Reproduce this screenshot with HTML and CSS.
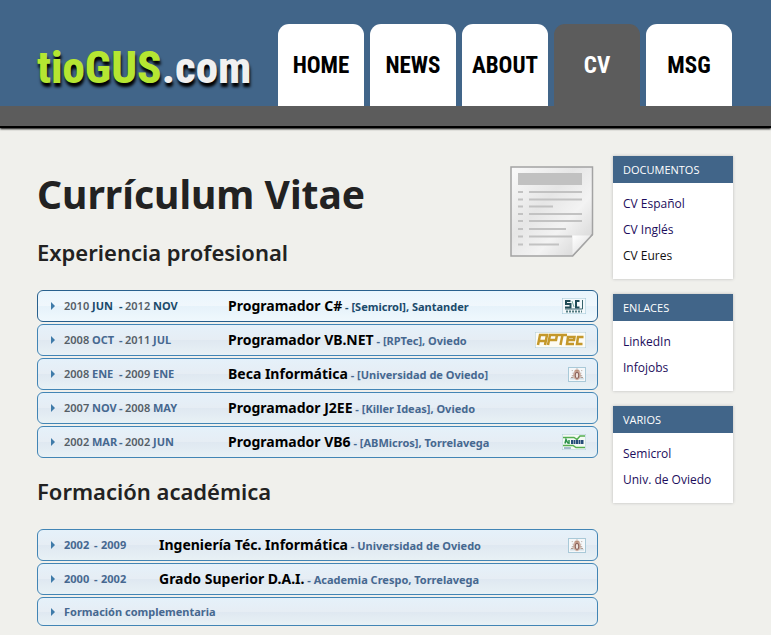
FILE: index.html
```html
<!DOCTYPE html>
<html lang="es">
<head>
<meta charset="utf-8">
<title>tioGUS.com - Currículum Vitae</title>
<link rel="stylesheet" href="styles.css">
</head>
<body>
<svg class="defs" aria-hidden="true">
  <symbol id="crest" viewBox="0 0 18 15">
    <path d="M1 12.500h16" stroke="#b9cbd6"/>
    <path d="M6 3c1-1.500 5-1.500 6 0l1.500 5c0 3-2 5-4.500 6-2.500-1-4.500-3-4.500-6z" fill="#cfae9f"/>
    <path d="M7 2h4v2H7z" fill="#b98f7b"/>
    <ellipse cx="9" cy="8.500" rx="2" ry="3.500" fill="#ece3de" stroke="#8b625a" stroke-width="1.200"/>
    <path d="M3 3h1M14 3h1M4 6h1M13 6h1M3 9h2M13 9h2M2 11h3M13 11h3M8.500 1h1" stroke="#a08a7f"/>
  </symbol>
</svg>
<header class="site-header">
  <div class="header-inner">
    <a class="logo" href="#"><span class="logo-name">tioGUS</span>.com</a>
    <nav class="tabs">
      <a href="#">HOME</a>
      <a href="#">NEWS</a>
      <a href="#">ABOUT</a>
      <a class="current" href="#">CV</a>
      <a href="#">MSG</a>
    </nav>
  </div>
</header>
<div class="page">
  <main class="content">
    <div class="intro">
      <div>
        <h1>Currículum Vitae</h1>
        <h2>Experiencia profesional</h2>
      </div>
      <svg class="doc-icon" viewBox="0 0 84 92" aria-hidden="true">
        <defs>
          <linearGradient id="paper" x1="0" y1="0" x2="1" y2="1">
            <stop offset="0" stop-color="#fafafa"/><stop offset=".4" stop-color="#e6e6e6"/><stop offset=".65" stop-color="#f3f3f3"/><stop offset="1" stop-color="#cfcfcf"/>
          </linearGradient>
          <linearGradient id="fold" x1="0" y1="0" x2="1" y2="1">
            <stop offset="0" stop-color="#fff"/><stop offset="1" stop-color="#d8d8d8"/>
          </linearGradient>
        </defs>
        <path d="M1 1h81.500v67.500l-20 21.500H1z" fill="url(#paper)" stroke="#a3a3a3" stroke-width="1.500"/>
        <path d="M62.500 90V69.500h20z" fill="url(#fold)"/>
        <path d="M62.500 90l20-21.500" stroke="#a3a3a3" stroke-width="1.500"/>
        <path d="M8 7h64v12H8z" fill="#c1c1c1"/>
        <path d="M8 26h5M8 33.500h5M8 40.500h5M8 48h5M8 55h5M8 63h5M8 70.500h5M8 78.500h5M19 26h53M19 33.500h53M19 40.500h24M19 48h53M19 55h53M19 63h37M19 70.500h43M19 78.500h30" stroke="#c2c2c2" stroke-width="2"/>
      </svg>
    </div>
    <div class="accordion jobs">
      <button class="active" type="button"><span class="dates"><span class="year">2010</span><span>JUN</span><span>-</span><span class="year">2012</span><span>NOV</span></span><span class="label"><b>Programador C#</b> - [Semicrol], Santander</span>
        <svg class="badge" width="24" height="16" viewBox="0 0 24 16" aria-hidden="true"><path d="M0 0h24v16H0z" fill="#f4f9fb" stroke="#9bc4d6"/><path d="M8.500 3H4v3h4.500v3.500H3M17.500 3H14v6.500h3.500" fill="none" stroke="#1f4b56" stroke-width="2"/><path d="M10 3l2 6" stroke="#7cae9f"/><path d="M20.500 2v9H3" fill="none" stroke="#36636c"/><path d="M4 13.500h16" stroke="#527b80" stroke-width="2" stroke-dasharray="2 1"/></svg></button>
      <button type="button"><span class="dates"><span class="year">2008</span><span>OCT</span><span>-</span><span class="year">2011</span><span>JUL</span></span><span class="label"><b>Programador VB.NET</b> - [RPTec], Oviedo</span>
        <svg class="badge" width="51" height="16" viewBox="0 0 51 16" aria-hidden="true"><path d="M0 0h51v16H0z" fill="#fcfbf4" stroke="#a9c9d8"/><path d="M3 13L5 3h7l-2 10M4 9h6M13 13l2-10h7l-1 5h-7M23 3h9M27.500 3l-2 10M39 12h-7l1-7h6.500l-.5 3h-6M48.500 5H43l-1 7h5.500" fill="none" stroke="#c4982a" stroke-width="2.500"/></svg></button>
      <button type="button"><span class="dates"><span class="year">2008</span><span>ENE</span><span>-</span><span class="year">2009</span><span>ENE</span></span><span class="label"><b>Beca Informática</b> - [Universidad de Oviedo]</span>
        <svg class="badge framed" width="18" height="15" aria-hidden="true"><use href="#crest"/></svg></button>
      <button type="button"><span class="dates"><span class="year">2007</span><span>NOV</span><span>-</span><span class="year">2008</span><span>MAY</span></span><span class="label"><b>Programador J2EE</b> - [Killer Ideas], Oviedo</span></button>
      <button type="button"><span class="dates"><span class="year">2002</span><span>MAR</span><span>-</span><span class="year">2002</span><span>JUN</span></span><span class="label"><b>Programador VB6</b> - [ABMicros], Torrelavega</span>
        <svg class="badge" width="24" height="16" viewBox="0 0 24 16" aria-hidden="true"><path d="M0 0h24v16H0z" fill="#f4faf4" stroke="#a9c9d8"/><path d="M1 3.500h11l3 2 3-3.500h5M1 11.500h10l3 2h9" fill="none" stroke="#54ae50" stroke-width="1.500"/><path d="M3 9.500l1-4 2 4M7 6v4" fill="none" stroke="#2a9048" stroke-width="1.500"/><path d="M9 8h13" stroke="#264c79" stroke-width="4" stroke-dasharray="2 .5"/><path d="M2 14h7" stroke="#537ca0"/></svg></button>
    </div>
    <h2 class="section-title">Formación académica</h2>
    <div class="accordion studies">
      <button type="button"><span class="dates"><span>2002</span><span>-</span><span>2009</span></span><span class="label"><b>Ingeniería Téc. Informática</b> - Universidad de Oviedo</span>
        <svg class="badge framed" width="18" height="15" aria-hidden="true"><use href="#crest"/></svg></button>
      <button type="button"><span class="dates"><span>2000</span><span>-</span><span>2002</span></span><span class="label"><b>Grado Superior D.A.I.</b> - Academia Crespo, Torrelavega</span></button>
      <button class="compact" type="button"><span class="label">Formación complementaria</span></button>
    </div>
  </main>
  <aside class="sidebar">
    <section>
      <h3>DOCUMENTOS</h3>
      <ul><li><a href="#">CV Español</a></li><li><a href="#">CV Inglés</a></li><li><a class="plain" href="#">CV Eures</a></li></ul>
    </section>
    <section>
      <h3>ENLACES</h3>
      <ul><li><a href="#">LinkedIn</a></li><li><a href="#">Infojobs</a></li></ul>
    </section>
    <section>
      <h3>VARIOS</h3>
      <ul><li><a href="#">Semicrol</a></li><li><a href="#">Univ. de Oviedo</a></li></ul>
    </section>
  </aside>
</div>
</body>
</html>
```
FILE: styles.css
```css
* { box-sizing: border-box; }

body {
  margin: 0;
  background: #f0f0ec;
  color: #222;
  font-family: "Noto Sans", "Open Sans", sans-serif;
}

a { text-decoration: none; }

.defs { position: absolute; width: 0; height: 0; }

.site-header {
  background: #416589;
  border-bottom: 2px solid #000;
  box-shadow: 0 1px 2px #000;
}

.site-header::after {
  content: "";
  display: block;
  height: 20px;
  background: #5c5c5c;
}

.header-inner {
  display: flex;
  justify-content: space-between;
  align-items: flex-end;
  padding: 24px 39px 0 37px;
}

.logo {
  padding-bottom: 10px;
  color: #f0f0f0;
  font: 800 45px/56px "Roboto Condensed", Roboto, sans-serif;
  text-shadow: 1px 4px 3px #000;
}

.logo-name { color: #b5e632; }

.tabs { display: flex; gap: 6px; }

.tabs a {
  width: 86px;
  padding-top: 2px;
  border-radius: 11px 11px 0 0;
  background: #fff;
  color: #000;
  font: bold 23px/80px "Roboto Condensed", "Open Sans Condensed", Roboto, "Liberation Sans", sans-serif;
  text-align: center;
}

.tabs .current { background: #5c5c5c; color: #fff; }

.page {
  display: flex;
  gap: 15px;
  align-items: flex-start;
  padding: 28px 38px 8px 37px;
}

.content { flex: 1; min-width: 0; }

.intro {
  display: flex;
  justify-content: space-between;
  align-items: flex-start;
  padding: 10px 4px 0 0;
}

h1 { margin: 0; font-size: 39px; line-height: 56px; }

h2 {
  margin: 14px 0 0;
  font-size: 22px;
  font-weight: 600;
  line-height: 32px;
}

.doc-icon { width: 84px; height: 92px; }

.section-title { margin: 17px 0 22px; }

.jobs { margin-top: 22px; }

.accordion { display: flex; flex-direction: column; gap: 2px; }

.accordion button {
  display: flex;
  align-items: center;
  height: 32px;
  padding: 0 11px 0 13px;
  border: 1px solid #4285b5;
  border-radius: 6px;
  background: linear-gradient(#e5f1fa, #e6edf4 50%, #dfe8f1 51%, #e8f1f5);
  color: #466890;
  font: bold 11px/16px "Noto Sans", "Open Sans", sans-serif;
  text-align: left;
}

.accordion button::before {
  content: "";
  margin-right: 9px;
  border: 4px solid transparent;
  border-right: 0;
  border-left-color: #3f7ba9;
}

.accordion .active {
  border-color: #28608d;
  background: linear-gradient(#e9f5fd, #f0f7fc 50%, #e6f2fa 51%, #eff8fd);
  color: #1b4a6b;
}

.accordion .compact { height: 29px; }

.dates { display: grid; }

.jobs .dates { grid-template-columns: 28px 27px 6px 28px 75px; }

.studies .dates { grid-template-columns: 30px 7px 58px; }

.year { color: #555e66; font-weight: 600; }

.label { flex: 1; }

.label b { color: #000; font-size: 14px; font-weight: 700; }

.framed { border: 1px solid #a9c9d8; background: #f5f8fa; }

.sidebar {
  display: flex;
  flex-direction: column;
  gap: 15px;
  width: 120px;
  font-family: "Open Sans", "Noto Sans", sans-serif;
}

.sidebar section { background: #fff; box-shadow: 0 0 3px #bbb; }

.sidebar h3 {
  margin: 0;
  padding: 0 10px;
  background: #416589;
  color: #fff;
  font-size: 11px;
  font-weight: 400;
  line-height: 27px;
}

.sidebar ul { margin: 0; padding: 8px 10px 10px; list-style: none; }

.sidebar li { font-size: 12px; line-height: 26px; }

.sidebar a { color: #1c0d5c; }

.sidebar .plain { color: #111; }
```
